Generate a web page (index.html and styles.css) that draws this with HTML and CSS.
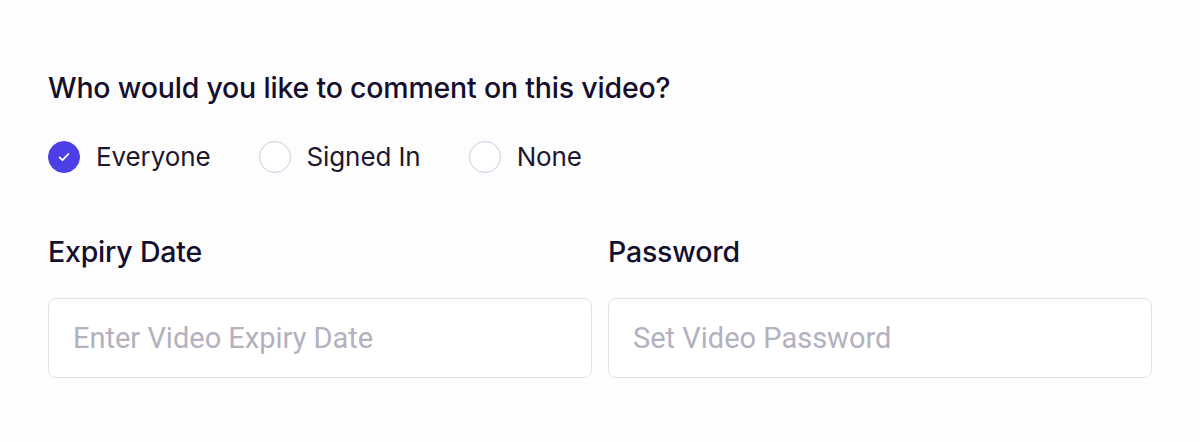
FILE: index.html
```html
<!DOCTYPE html>
<html lang="en">

<head>
    <meta charset="UTF-8">
    <meta name="viewport" content="width=device-width, initial-scale=1.0">
    <title>Video Settings</title>
    <link rel="stylesheet" href="styles.css">
</head>

<body>
    <div class="container">
        <h2 class="question">Who would you like to comment on this video?</h2>

        <div class="radio-group">
            <label class="radio-option">
                <span class="radio checked">
                    <svg width="16" height="16" viewBox="0 0 16 16" fill="none">
                        <path d="M3.6 8.4l2.9 2.8 5.9-6.2" stroke="#fff" stroke-width="1.8" stroke-linecap="round" stroke-linejoin="round" />
                    </svg>
                </span>
                <span class="radio-label">Everyone</span>
            </label>
            <label class="radio-option">
                <span class="radio"></span>
                <span class="radio-label">Signed In</span>
            </label>
            <label class="radio-option">
                <span class="radio"></span>
                <span class="radio-label">None</span>
            </label>
        </div>

        <div class="fields">
            <div class="form-group">
                <label for="expiry" class="form-label">Expiry Date</label>
                <input type="text" id="expiry" class="form-input" placeholder="Enter Video Expiry Date">
            </div>
            <div class="form-group">
                <label for="password" class="form-label">Password</label>
                <input type="text" id="password" class="form-input" placeholder="Set Video Password">
            </div>
        </div>
    </div>
</body>

</html>
```

FILE: styles.css
```css
* {
    margin: 0;
    padding: 0;
    box-sizing: border-box;
}

body {
    font-family: 'Inter', 'Noto Sans', sans-serif;
    background: #fdfdfd;
    color: #140f2d;
}

.container {
    padding: 70px 48px 0;
}

.question {
    font-size: 28.5px;
    font-weight: 500;
    line-height: 36px;
    letter-spacing: -0.2px;
}

.radio-group {
    display: flex;
    gap: 48px;
    margin-top: 35px;
}

.radio-option {
    display: flex;
    align-items: center;
    gap: 16px;
    cursor: pointer;
}

.radio {
    width: 32px;
    height: 32px;
    border-radius: 50%;
    border: 1px solid #cdcbe2;
    background: #fff;
    display: flex;
    align-items: center;
    justify-content: center;
}

.radio.checked {
    background: #4c3fe6;
    border-color: #4c3fe6;
}

.radio-label {
    font-size: 26px;
    line-height: 32px;
    color: #1c1830;
    letter-spacing: -0.1px;
}

.fields {
    display: grid;
    grid-template-columns: 1fr 1fr;
    gap: 16px;
    margin-top: 62px;
}

.form-label {
    display: block;
    font-size: 28.5px;
    font-weight: 500;
    line-height: 34px;
    margin-bottom: 29px;
    letter-spacing: -0.2px;
}

.form-input {
    width: 100%;
    height: 80px;
    padding: 0 24px;
    border: 1px solid #e2e1ea;
    border-radius: 8px;
    background: #fff;
    font-family: 'Roboto', sans-serif;
    font-size: 29px;
    color: #140f2d;
}

.form-input::placeholder {
    color: #b3b1bd;
}

.form-input:focus {
    outline: none;
    border-color: #4c3fe6;
}
```
